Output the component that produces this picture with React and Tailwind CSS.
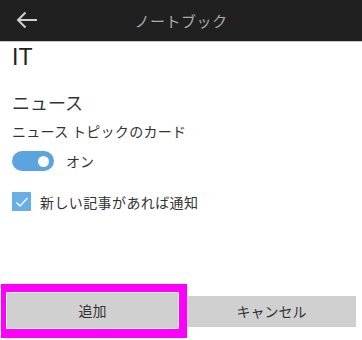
export default function App() {
  const jp = { fontFamily: '"Noto Sans CJK JP", "Liberation Sans", sans-serif' };
  return (
    <div className="w-[362px] h-[340px] bg-white flex flex-col overflow-hidden" style={jp}>
      <div className="h-[42px] shrink-0 bg-[#202020] border-b border-[#c4c4c4] flex items-center relative">
        <svg className="absolute left-[16px] top-[11px]" width="22" height="18" viewBox="0 0 22 18" fill="none">
          <path d="M21 9H2.5M9.5 1.5L2 9l7.5 7.5" stroke="#d0d0d0" strokeWidth="2" />
        </svg>
        <div className="w-full text-center text-[15px] text-[#ababab] leading-none tracking-[0.5px]">ノートブック</div>
      </div>
      <div className="px-[12px] flex flex-col">
        <div className="text-[23px] leading-[28px] text-[#222] mt-[1px]" style={{ fontFamily: '"Liberation Sans", sans-serif' }}>IT</div>
        <div className="text-[18px] leading-[24px] text-[#333] mt-[19px]">ニュース</div>
        <div className="text-[14px] leading-[18px] text-[#333] mt-[8px] tracking-[0.3px]">ニュース トピックのカード</div>
        <div className="flex items-center mt-[11px] h-[20px]">
          <div className="w-[42px] h-[20px] rounded-full bg-[#5ba4e0] relative">
            <div className="absolute right-[5px] top-[4.5px] w-[11px] h-[11px] rounded-full bg-white"></div>
          </div>
          <span className="ml-[12px] text-[14px] text-[#333] leading-none">オン</span>
        </div>
        <div className="flex items-center mt-[21px] h-[19px]">
          <div className="w-[19px] h-[19px] bg-[#6aaee6] flex items-center justify-center">
            <svg width="14" height="12" viewBox="0 0 14 12" fill="none">
              <path d="M1.5 6.5l3.5 3.5L12.5 2" stroke="white" strokeWidth="1.3" />
            </svg>
          </div>
          <span className="ml-[9px] text-[14px] text-[#333] leading-none tracking-[0.4px]">新しい記事があれば通知</span>
        </div>
      </div>
      <div className="flex-1"></div>
      <div className="flex items-center pl-[1px] mb-[2px]">
        <div className="w-[186px] h-[54px] border-[#ff00ff] border-l-[5px] border-t-[8px] border-r-[8px] border-b-[9px] p-[1px] bg-white">
          <div className="w-full h-full bg-[#d0d0d0] flex items-center justify-center text-[14px] text-[#333]">追加</div>
        </div>
        <div className="w-[169px] h-[31px] bg-[#d0d0d0] flex items-center justify-center text-[14px] text-[#333]">キャンセル</div>
      </div>
    </div>
  );
}
